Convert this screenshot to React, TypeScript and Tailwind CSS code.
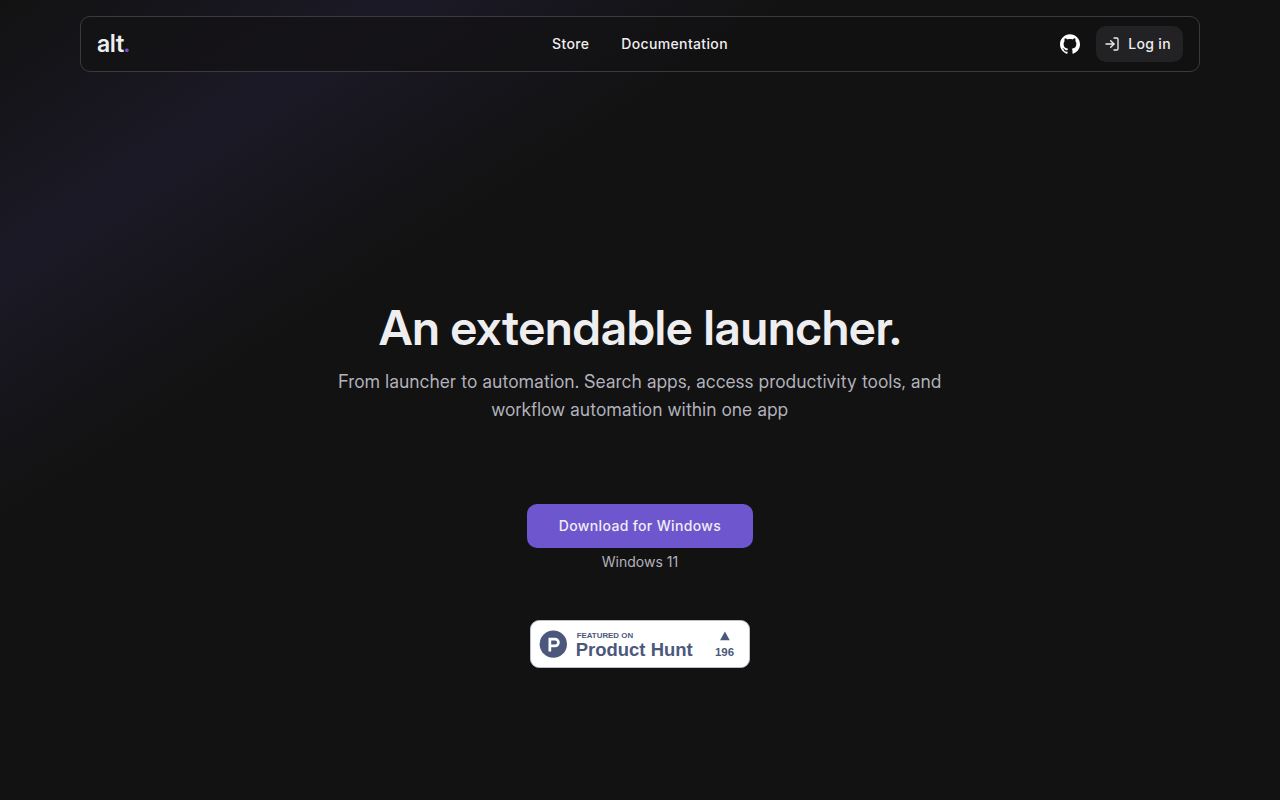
import React from 'react';
import { LogIn } from 'lucide-react';
import { SiGithub } from 'react-icons/si';

const navLinks = [
  { label: 'Store', href: '#store' },
  { label: 'Documentation', href: '#documentation' },
];

const Navbar: React.FC = () => {
  return (
    <header className="px-4 pt-4 md:px-20">
      <div className="grid h-14 grid-cols-3 items-center rounded-[10px] border border-[#3a3a3d] bg-[#121113]/70 px-4">
        <a
          href="#home"
          className="justify-self-start font-['Inter_Display',Inter,sans-serif] text-2xl font-semibold"
        >
          alt<span className="text-[#6e56cf]">.</span>
        </a>

        <nav className="flex justify-center gap-8 text-sm font-medium tracking-wide">
          {navLinks.map((link) => (
            <a key={link.label} href={link.href}>
              {link.label}
            </a>
          ))}
        </nav>

        <div className="flex items-center gap-4 justify-self-end">
          <a href="#github" aria-label="GitHub">
            <SiGithub size={20} className="text-white" />
          </a>
          <button
            type="button"
            className="flex h-9 items-center gap-2 rounded-[10px] bg-[#222225] pr-3 pl-2 text-sm font-medium tracking-wide"
          >
            <LogIn size={16} />
            Log in
          </button>
        </div>
      </div>
    </header>
  );
};

const ProductHuntBadge: React.FC = () => {
  return (
    <a href="#product-hunt">
      <svg
        width="220"
        height="48"
        viewBox="0 0 250 54.5"
        fill="#4b587c"
        className="font-['Liberation_Sans',sans-serif] font-bold"
      >
        <rect x="0.5" y="0.5" width="249" height="53.5" rx="10" fill="#fff" stroke="#c3c8d6" />
        <text x="53" y="20" fontSize="9">
          FEATURED ON
        </text>
        <text x="52" y="41" fontSize="21">
          Product Hunt
        </text>
        <path d="M227 23H216L221.5 13Z" />
        <text x="221" y="41" fontSize="13" textAnchor="middle">
          196
        </text>
        <circle cx="26.5" cy="27.5" r="15.5" />
        <path
          transform="translate(11 12)"
          fill="#fff"
          fillRule="evenodd"
          d="M17.43 15.96H13.09V11.31H17.43A2.3 2.3 0 0 1 17.43 15.96M17.43 8.21H10.03V23.71H13.09V19.06H17.43A5.4 5.4 0 0 0 17.43 8.21"
        />
      </svg>
    </a>
  );
};

export default function App() {
  return (
    <div className="min-h-screen bg-[#121212] bg-[linear-gradient(to_bottom_right,#121212_0%,#1b1926_16%,#121212_31%)] bg-[length:100%_105%] bg-no-repeat font-[Inter,sans-serif] text-[#eeeef0]">
      <Navbar />

      <main className="flex flex-col items-center px-4 pt-[232px] pb-16 text-center">
        <h1 className="font-['Inter_Display',Inter,sans-serif] text-5xl leading-none font-semibold">
          An extendable launcher.
        </h1>
        <p className="mt-4 max-w-2xl font-['Inter_Display',Inter,sans-serif] text-lg leading-7 tracking-wide text-[#b2b3bd]">
          From launcher to automation. Search apps, access productivity tools, and workflow
          automation within one app
        </p>

        <button
          type="button"
          className="mt-20 h-11 rounded-[10px] bg-[#6e56cf] px-8 text-sm font-medium tracking-wide"
        >
          Download for Windows
        </button>
        <span className="mt-1 mb-12 text-sm text-[#b2b3bd]">Windows 11</span>

        <ProductHuntBadge />
      </main>
    </div>
  );
}
